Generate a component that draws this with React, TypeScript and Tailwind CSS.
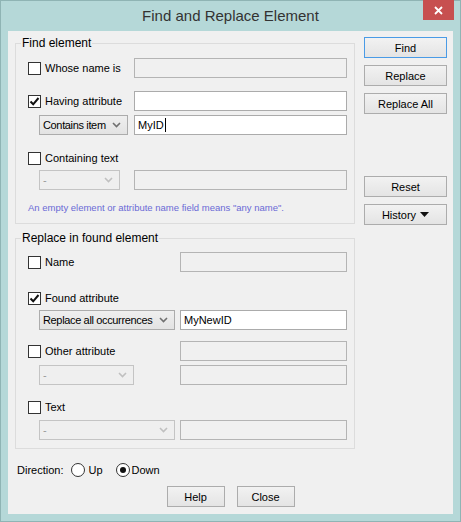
import React from 'react';

const font = { fontFamily: '"Liberation Sans", Arial, sans-serif' };

function Check({ checked }: { checked?: boolean }) {
  return (
    <span className="flex h-[13px] w-[13px] shrink-0 items-center justify-center border border-[#333333] bg-white">
      {checked && (
        <svg width="11" height="11" viewBox="0 0 11 11">
          <path d="M1.5 5.5 L4.2 8.3 L9.5 2" fill="none" stroke="#111" strokeWidth="2" />
        </svg>
      )}
    </span>
  );
}

function CheckRow({ label, checked }: { label: string; checked?: boolean }) {
  return (
    <div className="flex items-center gap-[4px] text-[#000]">
      <Check checked={checked} />
      <span>{label}</span>
    </div>
  );
}

function Field({ w, value, disabled }: { w: string; value?: string; disabled?: boolean }) {
  return (
    <div
      className={`flex h-[20px] ${w} shrink-0 items-center border px-[3px] ${
        disabled ? 'border-[#b4b4b4] bg-[#f0f0f0]' : 'border-[#ababab] bg-white'
      }`}
    >
      {value && <span>{value}</span>}
      {value === 'MyID' && <span className="ml-[1px] h-[14px] w-px bg-black" />}
    </div>
  );
}

function Chevron({ color }: { color: string }) {
  return (
    <svg width="9" height="6" viewBox="0 0 9 6">
      <path d="M1 1 L4.5 4.5 L8 1" fill="none" stroke={color} strokeWidth="1.6" />
    </svg>
  );
}

function Select({ w, value, disabled }: { w: string; value: string; disabled?: boolean }) {
  return (
    <div
      className={`flex h-[20px] ${w} shrink-0 items-center justify-between whitespace-nowrap border pl-[3px] pr-[6px] ${
        disabled ? 'border-[#c4c4c4] bg-[#efefef] text-[#9a9a9a]' : 'border-[#acacac] bg-gradient-to-b from-[#efefef] to-[#e3e3e3]'
      }`}
    >
      <span className="tracking-[-0.35px]">{value}</span>
      <Chevron color={disabled ? '#c0c0c0' : '#707070'} />
    </div>
  );
}

function Btn({ children, def, w = 'w-[83px]' }: { children: React.ReactNode; def?: boolean; w?: string }) {
  return (
    <div
      className={`flex h-[21px] ${w} items-center justify-center border bg-gradient-to-b from-[#f2f2f2] to-[#e4e4e4] ${
        def ? 'border-[#4a9be6]' : 'border-[#acacac]'
      }`}
    >
      {children}
    </div>
  );
}

function Radio({ on }: { on?: boolean }) {
  return (
    <span className="flex h-[14px] w-[14px] items-center justify-center rounded-full border border-[#333] bg-white">
      {on && <span className="h-[6px] w-[6px] rounded-full bg-[#111]" />}
    </span>
  );
}

export default function App() {
  return (
    <div style={font} className="h-[522px] w-[461px] border border-[#8fb4b4] bg-[#b5d8d8] text-[11px] leading-[14px] text-black">
      <div className="relative flex h-[30px] items-center justify-center">
        <span className="text-[15px] text-[#333]">Find and Replace Element</span>
        <div className="absolute right-[6px] top-[-1px] flex h-[20px] w-[31px] items-center justify-center bg-[#c75050]">
          <svg width="9" height="9" viewBox="0 0 9 9">
            <path d="M1 1 L8 8 M8 1 L1 8" stroke="#fff" strokeWidth="1.8" />
          </svg>
        </div>
      </div>
      <div className="mx-[7px] h-[483px] bg-[#f0f0f0] px-[7px] pb-[6px]">
        <div className="flex gap-[9px]">
          <div className="w-[340px]">
            <fieldset className="mt-[5px] border border-[#dcdcdc] pb-[8px] pl-[12px] pr-[7px]">
              <legend className="ml-[-7px] px-[1px] text-[12px]">Find element</legend>
              <div className="mt-[8px] flex h-[20px] items-center justify-between">
                <CheckRow label="Whose name is" />
                <Field w="w-[213px]" disabled />
              </div>
              <div className="mt-[13px] flex h-[20px] items-center justify-between">
                <CheckRow label="Having attribute" checked />
                <Field w="w-[213px]" />
              </div>
              <div className="mt-[4px] flex h-[20px] items-center gap-[6px] pl-[11px]">
                <Select w="w-[89px]" value="Contains item" />
                <Field w="w-[213px]" value="MyID" />
              </div>
              <div className="mt-[13px] flex h-[20px] items-center">
                <CheckRow label="Containing text" />
              </div>
              <div className="mt-[2px] flex h-[20px] items-center justify-between pl-[11px]">
                <Select w="w-[81px]" value="-" disabled />
                <Field w="w-[213px]" disabled />
              </div>
              <div className="mt-[11px] text-[9.5px] text-[#6a6ad6]">
                An empty element or attribute name field means "any name".
              </div>
            </fieldset>
            <fieldset className="mt-[7px] border border-[#dcdcdc] pb-[8px] pl-[12px] pr-[7px]">
              <legend className="ml-[-7px] px-[1px] text-[12px]">Replace in found element</legend>
              <div className="mt-[7px] flex h-[20px] items-center justify-between">
                <CheckRow label="Name" />
                <Field w="w-[167px]" disabled />
              </div>
              <div className="mt-[16px] flex h-[20px] items-center">
                <CheckRow label="Found attribute" checked />
              </div>
              <div className="mt-[2px] flex h-[20px] items-center justify-between pl-[11px]">
                <Select w="w-[136px]" value="Replace all occurrences" />
                <Field w="w-[167px]" value="MyNewID" />
              </div>
              <div className="mt-[11px] flex h-[20px] items-center justify-between">
                <CheckRow label="Other attribute" />
                <Field w="w-[167px]" disabled />
              </div>
              <div className="mt-[4px] flex h-[20px] items-center justify-between pl-[11px]">
                <Select w="w-[95px]" value="-" disabled />
                <Field w="w-[167px]" disabled />
              </div>
              <div className="mt-[12px] flex h-[20px] items-center">
                <CheckRow label="Text" />
              </div>
              <div className="mt-[3px] flex h-[20px] items-center justify-between pl-[11px]">
                <Select w="w-[136px]" value="-" disabled />
                <Field w="w-[167px]" disabled />
              </div>
            </fieldset>
          </div>
          <div className="flex flex-col pt-[6px]">
            <Btn def>Find</Btn>
            <div className="mt-[7px]">
              <Btn>Replace</Btn>
            </div>
            <div className="mt-[7px]">
              <Btn>Replace All</Btn>
            </div>
            <div className="mt-[62px]">
              <Btn>Reset</Btn>
            </div>
            <div className="mt-[7px]">
              <Btn>
                <span>History</span>
                <svg className="ml-[4px]" width="9" height="5" viewBox="0 0 9 5">
                  <path d="M0 0 H9 L4.5 5 Z" fill="#111" />
                </svg>
              </Btn>
            </div>
          </div>
        </div>
        <div className="mt-[11px] flex h-[20px] items-center pl-[2px]">
          <span>Direction:</span>
          <span className="ml-[8px] flex items-center gap-[3px]">
            <Radio />
            <span>Up</span>
          </span>
          <span className="ml-[13px] flex items-center gap-[2px]">
            <Radio on />
            <span>Down</span>
          </span>
        </div>
        <div className="mt-[6px] flex justify-center gap-[12px]">
          <Btn w="w-[58px]">Help</Btn>
          <Btn w="w-[58px]">Close</Btn>
        </div>
      </div>
    </div>
  );
}
